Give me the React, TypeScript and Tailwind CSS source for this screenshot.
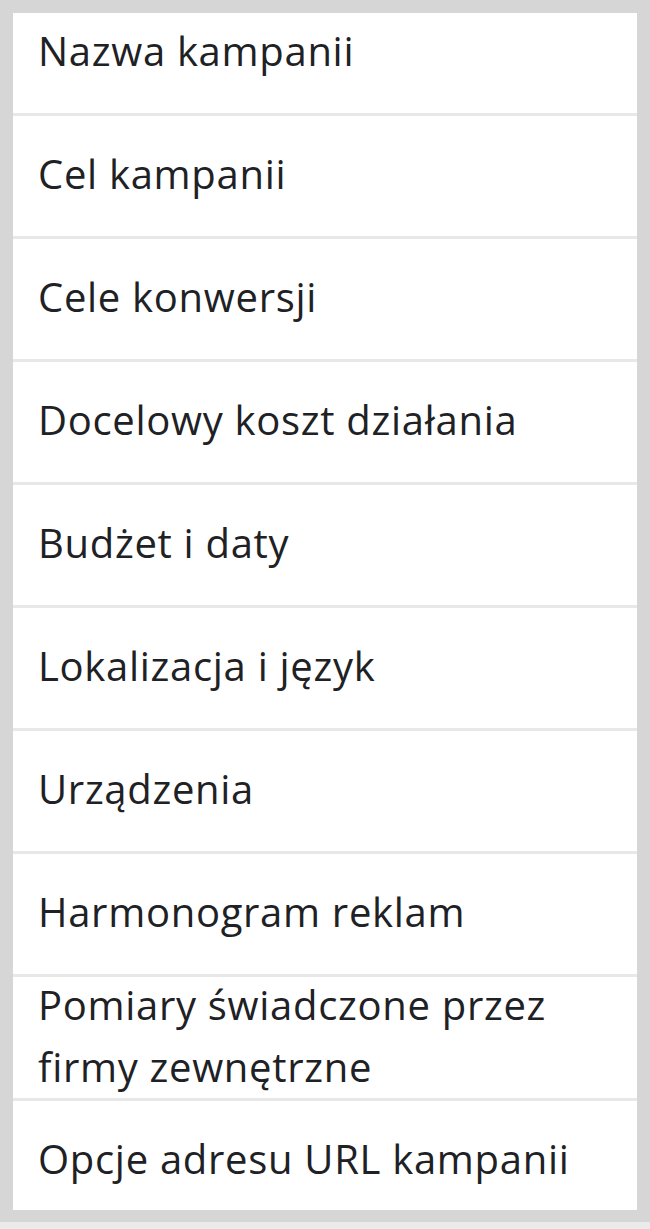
const items = [
  "Nazwa kampanii",
  "Cel kampanii",
  "Cele konwersji",
  "Docelowy koszt działania",
  "Budżet i daty",
  "Lokalizacja i język",
  "Urządzenia",
  "Harmonogram reklam",
];

export default function App() {
  return (
    <div className="h-[1229px] w-[650px] overflow-hidden bg-[#d6d6d6] font-['Open_Sans',sans-serif] text-[40px] leading-[62px] tracking-[0.7px] text-[#202124]">
      <div className="mx-[13px] mt-[13px] flex h-[1197px] flex-col overflow-hidden bg-white">
        {items.map((label, i) => (
          <div
            key={label}
            className={
              i === 0
                ? "shrink-0 pb-[31px] pl-[25px] pt-[7px]"
                : "shrink-0 border-t-[3px] border-[#e8e8e8] pb-[31px] pl-[25px] pt-[27px]"
            }
          >
            {label}
          </div>
        ))}
        <div className="flex h-[124px] shrink-0 items-center border-t-[3px] border-[#e8e8e8] pl-[25px]">
          <div className="-mt-[6px] -mb-[2px]">
            Pomiary świadczone przez
            <br />
            firmy zewnętrzne
          </div>
        </div>
        <div className="shrink-0 border-t-[3px] border-[#e8e8e8] pl-[25px] pt-[27px]">
          Opcje adresu URL kampanii
        </div>
      </div>
      <div className="mt-[12px] h-[7px] bg-[#ebebeb]" />
    </div>
  );
}
